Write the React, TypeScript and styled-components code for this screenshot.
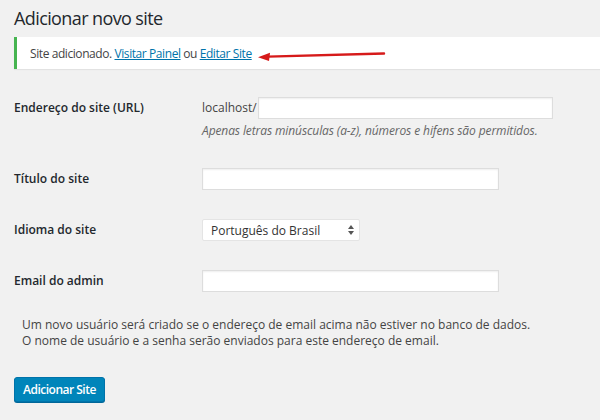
import styled, { createGlobalStyle } from "styled-components";

const GlobalStyle = createGlobalStyle`
  html, body {
    margin: 0;
    padding: 0;
    background: #f1f1f1;
  }
  body {
    font-family: "Open Sans", "Liberation Sans", sans-serif;
    font-size: 12px;
    color: #444;
  }
`;

const Wrap = styled.div`
  width: 600px;
  height: 420px;
  overflow: hidden;
  padding-left: 14px;
  box-sizing: border-box;
`;

const Title = styled.h1`
  margin: 0;
  padding-top: 4px;
  font-size: 18px;
  font-weight: 400;
  letter-spacing: -0.6px;
  line-height: 29px;
  color: #23282d;
`;

const Notice = styled.div`
  display: flex;
  align-items: center;
  height: 32px;
  margin-top: 4px;
  padding-left: 13px;
  background: #fff;
  border-left: 3px solid #46b450;
  box-shadow: 0 1px 1px rgba(0, 0, 0, 0.06);
  color: #444;
  letter-spacing: -0.42px;
  white-space: nowrap;
`;

const Link = styled.a`
  color: #0073aa;
  text-decoration: underline;
`;

const Arrow = styled.svg`
  margin-left: 4px;
  margin-top: 5px;
  flex: none;
`;

const Form = styled.div`
  margin-top: 14px;
`;

const Row = styled.div`
  display: grid;
  grid-template-columns: 188px 1fr;
  padding: 14px 0 15px;
  align-items: start;
`;

const Label = styled.div`
  line-height: 22px;
  font-weight: 600;
  color: #23282d;
`;

const Field = styled.div`
  display: flex;
  align-items: center;
  line-height: 22px;
`;

const Prefix = styled.span`
  color: #444;
  margin-right: 1px;
`;

const Input = styled.div<{ $w: number }>`
  width: ${(p) => p.$w}px;
  height: 22px;
  box-sizing: border-box;
  background: #fff;
  border: 1px solid #ddd;
  box-shadow: inset 0 1px 2px rgba(0, 0, 0, 0.07);
`;

const Hint = styled.div`
  margin-top: 3px;
  line-height: 17px;
  font-style: italic;
  letter-spacing: -0.1px;
  color: #666;
`;

const SelectBox = styled.div`
  display: flex;
  align-items: center;
  justify-content: space-between;
  width: 158px;
  height: 22px;
  box-sizing: border-box;
  padding: 0 4px 0 8px;
  background: #fff;
  border: 1px solid #e4e4e4;
  border-radius: 2px;
  color: #333;
`;

const Note = styled.p`
  margin: 10px 0 0;
  padding-left: 8px;
  line-height: 16px;
  color: #444;
`;

const Button = styled.button`
  margin-top: 28px;
  height: 25px;
  padding: 0 8px;
  background: #0085ba;
  border: 1px solid #0073aa;
  border-radius: 3px;
  box-shadow: 0 1px 0 #006799;
  color: #fff;
  font-family: "Open Sans", "Liberation Sans", sans-serif;
  font-size: 12px;
  font-weight: 600;
  letter-spacing: -0.5px;
`;

function Updown() {
  return (
    <svg width="8" height="12" viewBox="0 0 8 12">
      <path d="M4 1 L7 5 L1 5 Z" fill="#555" />
      <path d="M4 11 L7 7 L1 7 Z" fill="#555" />
    </svg>
  );
}

export default function App() {
  return (
    <Wrap>
      <GlobalStyle />
      <Title>Adicionar novo site</Title>
      <Notice>
        Site adicionado.&nbsp;<Link>Visitar Painel</Link>&nbsp;ou&nbsp;
        <Link>Editar Site</Link>
        <Arrow width="131" height="10" viewBox="0 0 131 10">
          <path d="M128 2.5 L12 5.6" stroke="#d61a1a" strokeWidth="2.4" strokeLinecap="round" />
          <path d="M2 6.2 L14 1.8 L13 10 Z" fill="#d61a1a" />
        </Arrow>
      </Notice>
      <Form>
        <Row>
          <Label>Endereço do site (URL)</Label>
          <div>
            <Field>
              <Prefix>localhost/</Prefix>
              <Input $w={295} />
            </Field>
            <Hint>Apenas letras minúsculas (a-z), números e hifens são permitidos.</Hint>
          </div>
        </Row>
        <Row>
          <Label>Título do site</Label>
          <Input $w={297} />
        </Row>
        <Row>
          <Label>Idioma do site</Label>
          <SelectBox>
            <span>Português do Brasil</span>
            <Updown />
          </SelectBox>
        </Row>
        <Row>
          <Label>Email do admin</Label>
          <Input $w={297} />
        </Row>
      </Form>
      <Note>
        Um novo usuário será criado se o endereço de email acima não estiver no banco de dados.
        <br />
        O nome de usuário e a senha serão enviados para este endereço de email.
      </Note>
      <Button>Adicionar Site</Button>
    </Wrap>
  );
}
